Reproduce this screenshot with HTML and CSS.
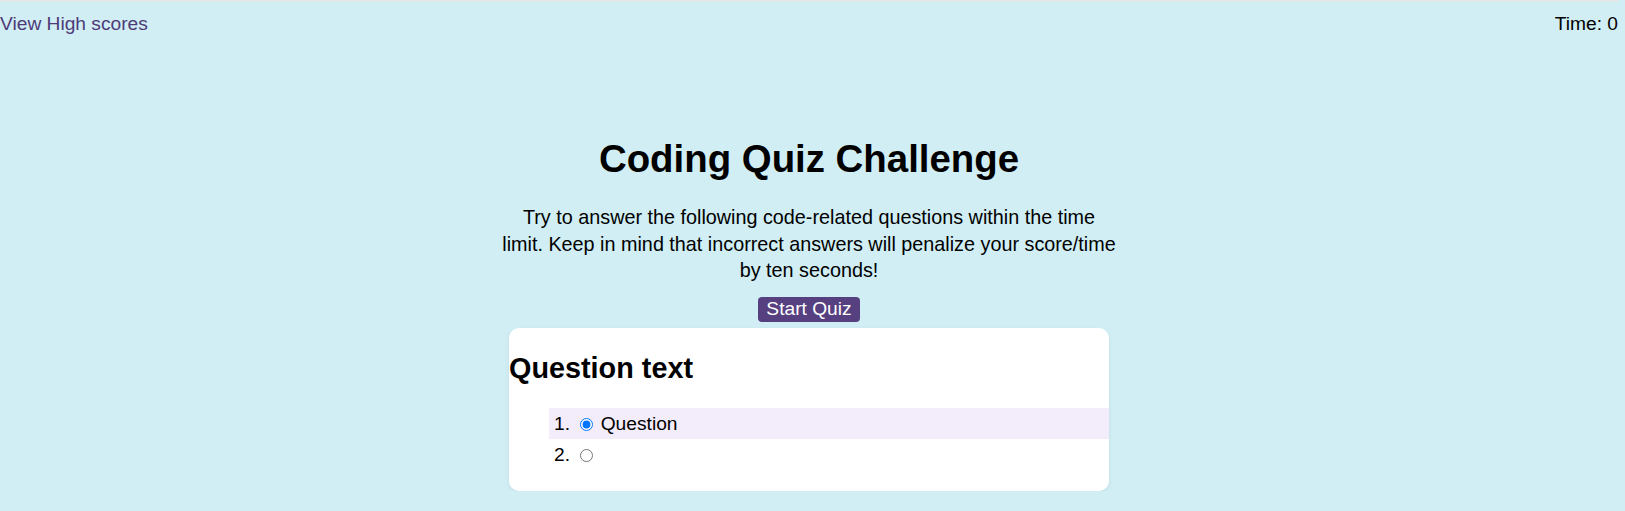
FILE: index.html
```html
<!DOCTYPE html>
<html lang="en">
<head>
<meta charset="utf-8">
<title>Coding Quiz</title>
<link rel="stylesheet" href="styles.css">
</head>
<body>
<header class="topbar">
  <a class="scores-link" href="#">View High scores</a>
  <div class="timer">Time: 0</div>
</header>
<main class="main">
  <h1 class="title">Coding Quiz Challenge</h1>
  <p class="intro">Try to answer the following code-related questions within the time limit. Keep in mind that incorrect answers will penalize your score/time by ten seconds!</p>
  <button class="start-btn" type="button">Start Quiz</button>
  <section class="card">
    <h2 class="question">Question text</h2>
    <ol class="choices">
      <li class="choice choice-active"><input type="radio" name="q" checked> <label>Question</label></li>
      <li class="choice"><input type="radio" name="q"></li>
    </ol>
  </section>
</main>
</body>
</html>
```
FILE: styles.css
```css
html, body {
  margin: 0;
  padding: 0;
}
body {
  background: #d0eef4;
  border-top: 2px solid #e2e6e7;
  font-family: "Liberation Sans", Arial, sans-serif;
  font-size: 19.2px;
  color: #000;
  width: 1618px;
}
.topbar {
  display: flex;
  justify-content: space-between;
  align-items: flex-start;
  padding-top: 11px;
  line-height: 22px;
}
.scores-link {
  color: #4d3b78;
  text-decoration: none;
}
.timer {
  color: #000;
}
.main {
  display: flex;
  flex-direction: column;
  align-items: center;
}
.title {
  font-size: 38.4px;
  font-weight: bold;
  line-height: 44px;
  margin: 102px 0 0;
}
.intro {
  width: 615px;
  font-size: 19.8px;
  text-align: center;
  line-height: 26.5px;
  margin: 23px 0 0;
}
.start-btn {
  margin-top: 13px;
  background: #56407f;
  color: #fff;
  border: 0;
  border-radius: 4px;
  font-family: "Liberation Sans", Arial, sans-serif;
  font-size: 19.2px;
  line-height: 22px;
  height: 25px;
  padding: 0 8px;
}
.card {
  margin-top: 6px;
  width: 600px;
  background: #fff;
  border-radius: 10px;
  box-shadow: 0 2px 5px rgba(0, 0, 0, 0.06);
  display: flow-root;
}
.question {
  font-size: 28.8px;
  font-weight: bold;
  line-height: 33px;
  margin: 24px 0 23px;
}
.choices {
  margin: 0 0 21px;
  padding-left: 40px;
  list-style-position: inside;
}
.choice {
  height: 31px;
  line-height: 31px;
  padding-left: 5px;
}
.choice-active {
  background: #f3ecfb;
}
.choice input {
  width: 13px;
  height: 13px;
  margin: 0 2px 0 5px;
  vertical-align: -1px;
}
```
